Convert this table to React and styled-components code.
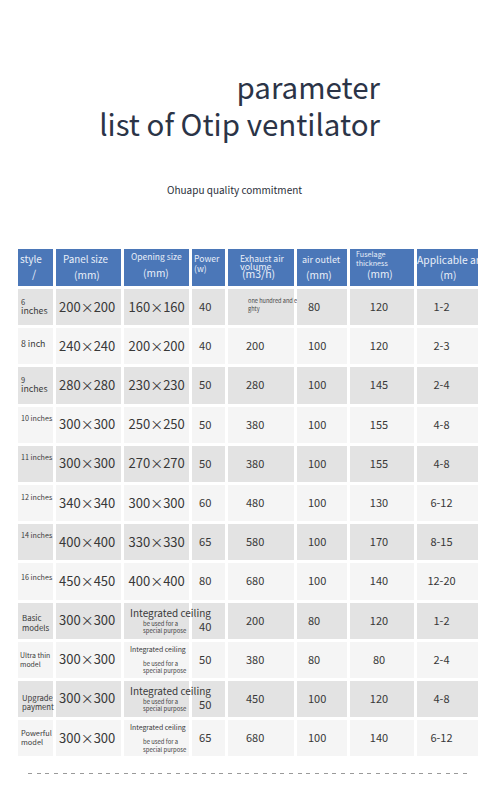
import React from "react";
import styled, { createGlobalStyle } from "styled-components";

const GlobalStyle = createGlobalStyle`
  html, body { margin: 0; padding: 0; background: #ffffff; }
  body { font-family: "Noto Sans CJK SC", "Noto Sans", sans-serif; color: #333; }
`;

const Page = styled.div`
  width: 498px;
  min-height: 800px;
  background: #fff;
  display: flex;
  flex-direction: column;
`;

const TitleBlock = styled.h1`
  margin: 0;
  padding: 68px 118px 0 0;
  text-align: right;
  font-weight: 400;
  font-size: 29.5px;
  line-height: 37px;
  color: #2b3447;
  letter-spacing: 0;
`;

const TitleLine = styled.div``;

const Subtitle = styled.div`
  margin: 41px 0 0 0;
  padding-left: 167px;
  font-size: 10px;
  line-height: 14px;
  color: #2a2f3a;
`;

const Grid = styled.div`
  margin: 52px 0 0 18px;
  width: 460px;
  display: grid;
  grid-template-columns: 35px 65px 65px 33px 66px 50px 64px 61px;
  grid-auto-rows: 36.2px;
  grid-template-rows: 37px;
  gap: 3px;
`;

const HeadCell = styled.div`
  background: #4b77b8;
  color: #e9eff9;
  overflow: hidden;
  display: flex;
  flex-direction: column;
  padding-top: ${(p) => p.$pt || 0}px;
  padding-left: ${(p) => p.$pl || 0}px;
  white-space: nowrap;
`;

const HeadLine = styled.span`
  display: block;
  font-size: ${(p) => p.$size}px;
  line-height: ${(p) => p.$lh}px;
  padding-left: ${(p) => p.$indent || 0}px;
`;

const Cell = styled.div`
  background: ${(p) => (p.$alt ? "#f5f5f5" : "#e3e3e3")};
  display: flex;
  align-items: center;
  justify-content: ${(p) => p.$justify || "flex-start"};
  padding-left: ${(p) => p.$pl || 0}px;
  padding-right: ${(p) => p.$pr || 0}px;
  padding-top: ${(p) => p.$pt || 0}px;
  padding-bottom: ${(p) => (p.$pb === undefined ? 2 : p.$pb)}px;
  font-size: ${(p) => p.$size || 11}px;
  color: #383838;
  white-space: nowrap;
  box-sizing: border-box;
  min-width: 0;
`;

const OverCell = styled(Cell)`
  position: relative;
  z-index: 1;
  flex-direction: column;
  align-items: flex-start;
  justify-content: center;
`;

const LabelBox = styled.div`
  display: flex;
  flex-direction: column;
  margin-bottom: ${(p) => p.$lift || 0}px;
`;

const LabelLine = styled.span`
  font-size: ${(p) => p.$size}px;
  line-height: ${(p) => p.$size + 1.5}px;
  color: #3a3a3a;
  white-space: nowrap;
`;

const TinyText = styled.span`
  display: block;
  font-size: 5.6px;
  line-height: 8px;
  color: #444;
`;

const CeilTitle = styled.span`
  font-size: ${(p) => (p.$big ? 10 : 6.9)}px;
  line-height: ${(p) => (p.$big ? 12 : 9)}px;
  margin-bottom: ${(p) => (p.$big ? 1 : 6)}px;
  color: #3a3a3a;
`;

const CeilSub = styled.span`
  font-size: 5.9px;
  line-height: 7.5px;
  padding-left: 13px;
  color: #444;
`;

const Dashed = styled.div`
  margin: 17px 0 0 28px;
  width: 444px;
  height: 1px;
  background: repeating-linear-gradient(to right, #9a9a9a 0 4px, transparent 4px 8.7px);
`;

const rows = [
  { label: [["6", 7.5], ["inches", 8.8]], lift: 0, a: "200×200", b: "160×160", p: "40", v: "tiny", o: "80", t: "120", r: "1-2" },
  { label: [["8 inch", 8.8]], lift: 4, a: "240×240", b: "200×200", p: "40", v: "200", o: "100", t: "120", r: "2-3" },
  { label: [["9", 7.5], ["inches", 8.8]], lift: 2, a: "280×280", b: "230×230", p: "50", v: "280", o: "100", t: "145", r: "2-4" },
  { label: [["10 inches", 7.2]], lift: 12, shift: 0, a: "300×300", b: "250×250", p: "50", v: "380", o: "100", t: "155", r: "4-8" },
  { label: [["11 inches", 7.2]], lift: 12, shift: 0, a: "300×300", b: "270×270", p: "50", v: "380", o: "100", t: "155", r: "4-8" },
  { label: [["12 inches", 7.2]], lift: 11, shift: 0, a: "340×340", b: "300×300", p: "60", v: "480", o: "100", t: "130", r: "6-12" },
  { label: [["14 inches", 7.2]], lift: 14, shift: 0, a: "400×400", b: "330×330", p: "65", v: "580", o: "100", t: "170", r: "8-15" },
  { label: [["16 inches", 7.2]], lift: 8, shift: 0, a: "450×450", b: "400×400", p: "80", v: "680", o: "100", t: "140", r: "12-20" },
  { label: [["Basic", 7.9], ["models", 7.9]], lift: -4, shift: 1, a: "300×300", ceil: "big", p: "40", pDown: true, v: "200", o: "80", t: "120", r: "1-2" },
  { label: [["Ultra thin", 6.9], ["model", 6.9]], lift: 0, shift: -1, a: "300×300", ceil: "small", p: "50", v: "380", o: "80", t: "80", r: "2-4" },
  { label: [["Upgrade", 7.7], ["payment", 7.7]], lift: -6, shift: 1, a: "300×300", ceil: "big", p: "50", pDown: true, v: "450", o: "100", t: "120", r: "4-8" },
  { label: [["Powerful", 7.4], ["model", 7.4]], lift: 0, shift: 0, a: "300×300", ceil: "small", p: "65", v: "680", o: "100", t: "140", r: "6-12" },
];

function Ceiling({ big, alt }) {
  return (
    <OverCell $alt={alt} $pl={6} $pb={0}>
      <CeilTitle $big={big}>Integrated ceiling</CeilTitle>
      <CeilSub>be used for a</CeilSub>
      <CeilSub>special purpose</CeilSub>
    </OverCell>
  );
}

export default function App() {
  return (
    <Page>
      <GlobalStyle />
      <TitleBlock>
        <TitleLine>parameter</TitleLine>
        <TitleLine>list of Otip ventilator</TitleLine>
      </TitleBlock>
      <Subtitle>Ohuapu quality commitment</Subtitle>
      <Grid>
        <HeadCell $pt={3} $pl={2}>
          <HeadLine $size={10} $lh={14}>style</HeadLine>
          <HeadLine $size={10.5} $lh={16} $indent={12}>/</HeadLine>
        </HeadCell>
        <HeadCell $pt={3} $pl={7}>
          <HeadLine $size={9.8} $lh={14}>Panel size</HeadLine>
          <HeadLine $size={10.2} $lh={18} $indent={11}>(mm)</HeadLine>
        </HeadCell>
        <HeadCell $pt={2} $pl={7}>
          <HeadLine $size={8.5} $lh={11}>Opening size</HeadLine>
          <HeadLine $size={10.2} $lh={22} $indent={12}>(mm)</HeadLine>
        </HeadCell>
        <HeadCell $pt={4} $pl={2}>
          <HeadLine $size={8.6} $lh={10}>Power</HeadLine>
          <HeadLine $size={8.6} $lh={10}>(w)</HeadLine>
        </HeadCell>
        <HeadCell $pt={4} $pl={12}>
          <HeadLine $size={8.6} $lh={10}>Exhaust air</HeadLine>
          <HeadLine $size={9} $lh={7}>volume</HeadLine>
          <HeadLine $size={10.5} $lh={8} $indent={2}>(m3/h)</HeadLine>
        </HeadCell>
        <HeadCell $pt={4} $pl={5}>
          <HeadLine $size={9} $lh={13}>air outlet</HeadLine>
          <HeadLine $size={10.2} $lh={18} $indent={4}>(mm)</HeadLine>
        </HeadCell>
        <HeadCell $pt={1} $pl={6}>
          <HeadLine $size={7.2} $lh={9}>Fuselage</HeadLine>
          <HeadLine $size={7.2} $lh={9}>thickness</HeadLine>
          <HeadLine $size={10.2} $lh={12} $indent={11}>(mm)</HeadLine>
        </HeadCell>
        <HeadCell $pt={4} $pl={0}>
          <HeadLine $size={10.3} $lh={13}>Applicable area</HeadLine>
          <HeadLine $size={10.2} $lh={18} $indent={23}>(m)</HeadLine>
        </HeadCell>

        {rows.map((r, i) => {
          const alt = i % 2 === 1;
          return (
            <React.Fragment key={i}>
              <Cell $alt={alt} $pl={3 + (r.shift || 0)} $pb={0}>
                <LabelBox $lift={r.lift}>
                  {r.label.map(([t, s], k) => (
                    <LabelLine key={k} $size={s}>{t}</LabelLine>
                  ))}
                </LabelBox>
              </Cell>
              <Cell $alt={alt} $pl={3} $size={13}>{r.a}</Cell>
              {r.ceil ? (
                <Ceiling big={r.ceil === "big"} alt={alt} />
              ) : (
                <Cell $alt={alt} $pl={4.5} $size={13}>{r.b}</Cell>
              )}
              <Cell $alt={alt} $pl={7} $size={11.2} $pt={r.pDown ? 12 : 0}>{r.p}</Cell>
              {r.v === "tiny" ? (
                <Cell $alt={alt} $pl={20} $pb={4}>
                  <div>
                    <TinyText>one hundred and ei</TinyText>
                    <TinyText>ghty</TinyText>
                  </div>
                </Cell>
              ) : (
                <Cell $alt={alt} $pl={18}>{r.v}</Cell>
              )}
              <Cell $alt={alt} $pl={11}>{r.o}</Cell>
              <Cell $alt={alt} $justify="center" $pr={6}>{r.t}</Cell>
              <Cell $alt={alt} $justify="center" $pr={12}>{r.r}</Cell>
            </React.Fragment>
          );
        })}
      </Grid>
      <Dashed />
    </Page>
  );
}
